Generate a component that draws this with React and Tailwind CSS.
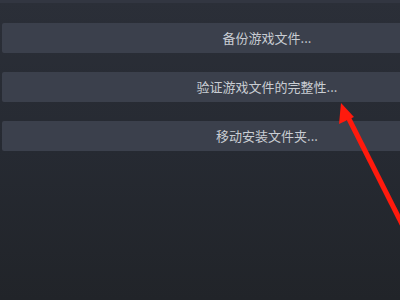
import React from "react";

const items = ["备份游戏文件...", "验证游戏文件的完整性...", "移动安装文件夹..."];

export default function App() {
  return (
    <div
      className="relative w-[400px] h-[300px] overflow-hidden bg-gradient-to-b from-[#2b2f38] via-[#262a32] to-[#212429]"
      style={{ fontFamily: '"Noto Sans CJK SC", "Noto Sans", sans-serif' }}
    >
      <div className="h-[3px] bg-[#323641]" />
      <div className="flex flex-col gap-[19px] pt-[20px] pl-[2px]">
        {items.map((t) => (
          <div
            key={t}
            className="w-[530px] h-[30px] shrink-0 flex items-center justify-center rounded-[2px] bg-[#3b404c] text-[13px] text-[#c9cdd3]"
          >
            {t}
          </div>
        ))}
      </div>
      <svg className="absolute left-0 top-0" width="400" height="300" viewBox="0 0 400 300">
        <line x1="347" y1="115" x2="410" y2="240" stroke="#ff1a0d" strokeWidth="5" />
        <polygon points="341,103 339,124 354,117" fill="#ff1a0d" />
      </svg>
    </div>
  );
}
